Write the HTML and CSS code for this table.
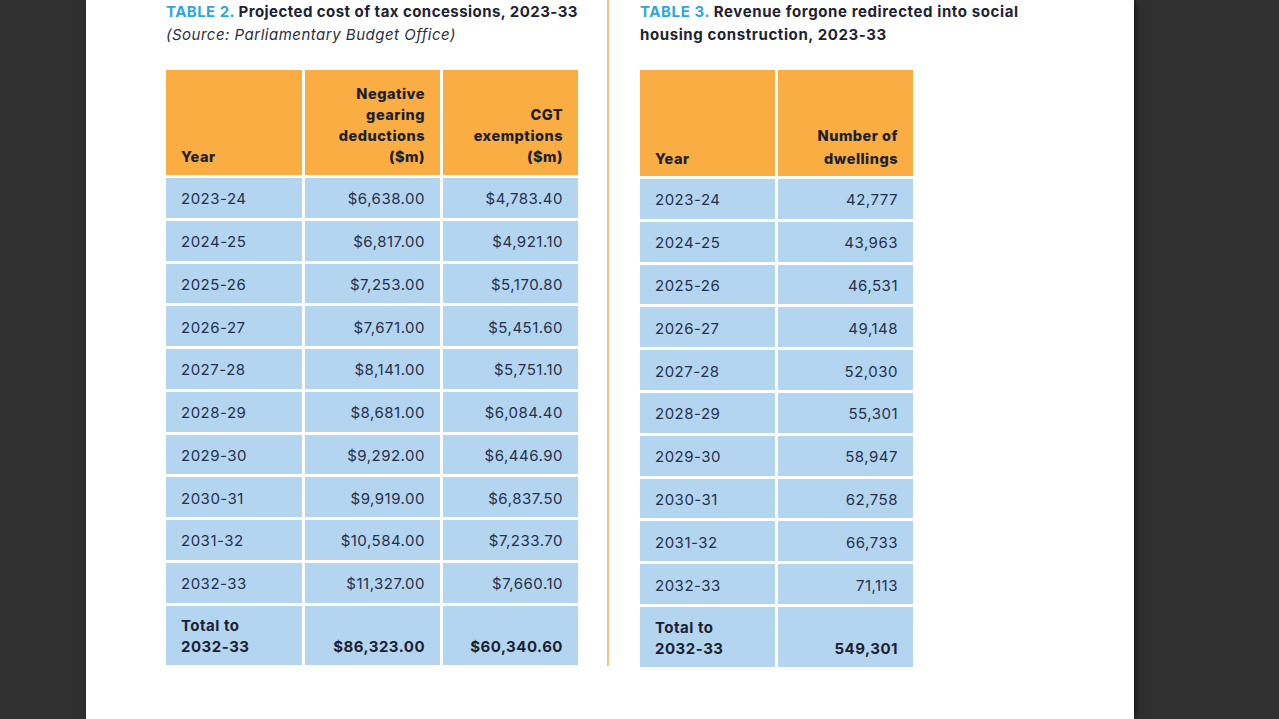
FILE: index.html
```html
<!DOCTYPE html>
<html>
<head>
<meta charset="utf-8">
<link rel="stylesheet" href="styles.css">
</head>
<body>
<div class="page">
  <section class="col col-left">
    <h2 class="title title-left"><span class="tag">TABLE 2.</span> Projected cost of tax concessions, 2023-33</h2>
    <p class="source">(Source: Parliamentary Budget Office)</p>
    <table class="tbl tbl-left">
      <thead>
        <tr class="head">
          <th class="c-year">Year</th>
          <th class="c-num">Negative<br>gearing<br>deductions<br>($m)</th>
          <th class="c-num">CGT<br>exemptions<br>($m)</th>
        </tr>
      </thead>
      <tbody>
        <tr><td class="c-year">2023-24</td><td class="c-num">$6,638.00</td><td class="c-num">$4,783.40</td></tr>
        <tr><td class="c-year">2024-25</td><td class="c-num">$6,817.00</td><td class="c-num">$4,921.10</td></tr>
        <tr><td class="c-year">2025-26</td><td class="c-num">$7,253.00</td><td class="c-num">$5,170.80</td></tr>
        <tr><td class="c-year">2026-27</td><td class="c-num">$7,671.00</td><td class="c-num">$5,451.60</td></tr>
        <tr><td class="c-year">2027-28</td><td class="c-num">$8,141.00</td><td class="c-num">$5,751.10</td></tr>
        <tr><td class="c-year">2028-29</td><td class="c-num">$8,681.00</td><td class="c-num">$6,084.40</td></tr>
        <tr><td class="c-year">2029-30</td><td class="c-num">$9,292.00</td><td class="c-num">$6,446.90</td></tr>
        <tr><td class="c-year">2030-31</td><td class="c-num">$9,919.00</td><td class="c-num">$6,837.50</td></tr>
        <tr><td class="c-year">2031-32</td><td class="c-num">$10,584.00</td><td class="c-num">$7,233.70</td></tr>
        <tr><td class="c-year">2032-33</td><td class="c-num">$11,327.00</td><td class="c-num">$7,660.10</td></tr>
        <tr class="total"><td class="c-year">Total to<br>2032-33</td><td class="c-num">$86,323.00</td><td class="c-num">$60,340.60</td></tr>
      </tbody>
    </table>
  </section>
  <div class="divider"></div>
  <section class="col col-right">
    <h2 class="title"><span class="tag">TABLE 3.</span> Revenue forgone redirected into social housing construction, 2023-33</h2>
    <table class="tbl tbl-right">
      <thead>
        <tr class="head">
          <th class="c-year">Year</th>
          <th class="c-num">Number of<br>dwellings</th>
        </tr>
      </thead>
      <tbody>
        <tr><td class="c-year">2023-24</td><td class="c-num">42,777</td></tr>
        <tr><td class="c-year">2024-25</td><td class="c-num">43,963</td></tr>
        <tr><td class="c-year">2025-26</td><td class="c-num">46,531</td></tr>
        <tr><td class="c-year">2026-27</td><td class="c-num">49,148</td></tr>
        <tr><td class="c-year">2027-28</td><td class="c-num">52,030</td></tr>
        <tr><td class="c-year">2028-29</td><td class="c-num">55,301</td></tr>
        <tr><td class="c-year">2029-30</td><td class="c-num">58,947</td></tr>
        <tr><td class="c-year">2030-31</td><td class="c-num">62,758</td></tr>
        <tr><td class="c-year">2031-32</td><td class="c-num">66,733</td></tr>
        <tr><td class="c-year">2032-33</td><td class="c-num">71,113</td></tr>
        <tr class="total"><td class="c-year">Total to<br>2032-33</td><td class="c-num">549,301</td></tr>
      </tbody>
    </table>
  </section>
</div>
</body>
</html>
```

FILE: styles.css
```css
* { box-sizing: border-box; }
html, body { margin: 0; padding: 0; }
body {
  background: #303030;
  width: 1279px;
  height: 719px;
  overflow: hidden;
  font-family: Inter, "Noto Sans", "Liberation Sans", sans-serif;
  color: #1d2535;
}
.page {
  margin-left: 86px;
  width: 1048px;
  height: 719px;
  background: #ffffff;
  display: flex;
  padding-left: 80px;
  box-shadow: 2px 0 6px rgba(0,0,0,0.5);
}
.col-left { width: 412px; }
.divider {
  width: 2px;
  height: 666px;
  background: #f6c27e;
  margin-left: 29px;
  margin-right: 31px;
}
.col-right { width: 390px; }
.title {
  margin: 0;
  font-size: 15px;
  font-weight: 700;
  line-height: 23px;
  color: #1d2330;
  letter-spacing: 0.6px;
}
.title-left {
  white-space: nowrap;
  letter-spacing: 0.45px;
}
.tag { color: #2ea6dd; }
.source {
  margin: 0;
  font-size: 15px;
  font-style: italic;
  line-height: 23px;
  color: #2a3040;
  letter-spacing: 0.5px;
}
.tbl {
  border-collapse: separate;
  border-spacing: 3px;
  margin: 21px -3px 0 -3px;
  table-layout: fixed;
}
.tbl th, .tbl td {
  padding: 0 15px;
  font-size: 15px;
  letter-spacing: 0.5px;
}
.tbl th {
  background: #f9ad42;
  font-weight: 800;
  font-size: 14.5px;
  line-height: 21px;
  vertical-align: bottom;
  padding-bottom: 8px;
  color: #1c1f2a;
  height: 105px;
}
.tbl td {
  background: #b4d5f0;
  height: 39.75px;
  vertical-align: middle;
  padding-top: 2px;
  color: #26304a;
  font-weight: 400;
}
.c-year { text-align: left; }
.c-num { text-align: right; }
.tbl-left .c-year { width: 136px; }
.tbl-left .c-num { width: 135px; }
.tbl-right .c-year { width: 135px; }
.tbl-right .c-num { width: 135px; }
.tbl-right td { height: 39.8px; }
.tbl-right th { line-height: 23px; padding-bottom: 6px; height: 106px; }
.tbl .total td {
  height: 59px;
  font-weight: 700;
  line-height: 21px;
  vertical-align: bottom;
  padding-top: 0;
  padding-bottom: 8px;
  color: #1c2130;
}
.tbl-right .total td { height: 60px; }
```
